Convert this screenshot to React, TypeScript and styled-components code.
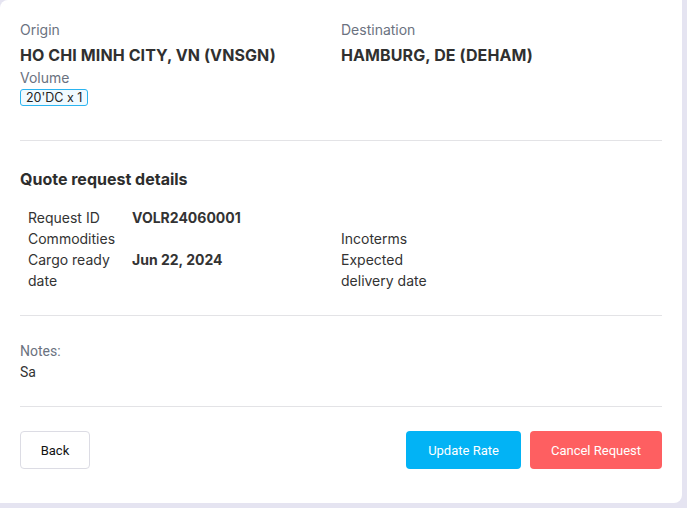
import React from "react";
import styled, { createGlobalStyle } from "styled-components";

const Global = createGlobalStyle`
  html, body { margin: 0; padding: 0; background: #e5e4f1; }
  body { font-family: Inter, "Noto Sans", sans-serif; }
`;

const Card = styled.div`
  width: 682px; height: 503px; box-sizing: border-box;
  background: #fff; border-radius: 8px 0 8px 0;
  padding: 19px 20px 0 20px;
  display: flex; flex-direction: column;
`;

const RouteRow = styled.div`
  display: grid; grid-template-columns: 321px 1fr;
  padding-bottom: 34px; border-bottom: 1px solid #e3e3e6;
`;

const Col = styled.div`
  display: flex; flex-direction: column;
`;

const Label = styled.div`
  font-size: 14px; line-height: 22px; color: #6b7280;
`;

const Place = styled.div`
  margin-top: 2px;
  font-size: 16px; line-height: 24px; font-weight: 700; color: #303030;
  letter-spacing: 0.1px;
`;

const Tag = styled.span`
  align-self: flex-start;
  font-size: 12.5px; line-height: 15px; color: #222;
  padding: 0 5px; border: 1px solid #2ab4f0; border-radius: 3px;
  background: #f0faff;
`;

const Section = styled.div`
  padding: 26px 0 24px; border-bottom: 1px solid #e3e3e6;
`;

const Title = styled.div`
  font-size: 16px; line-height: 24px; font-weight: 700; color: #2d2d2d;
  margin-bottom: 16px;
`;

const Grid = styled.div`
  display: grid; grid-template-columns: 104px 209px 100px;
  padding-left: 8px; font-size: 14px; line-height: 21px; color: #333;
`;

const Cell = styled.div<{ $bold?: boolean }>`
  font-weight: ${(p) => (p.$bold ? 700 : 400)};
`;

const Notes = styled.div`
  padding: 25px 0 23px; border-bottom: 1px solid #e3e3e6;
  font-family: Roboto, "Noto Sans", sans-serif;
`;

const NotesLabel = styled.div`
  font-size: 14px; line-height: 21px; color: #6b7280;
`;

const NotesText = styled.div`
  font-size: 14px; line-height: 21px; color: #333;
`;

const Footer = styled.div`
  display: flex; align-items: center; gap: 9px; padding-top: 24px;
`;

const Spacer = styled.div`
  flex: 1;
`;

const Btn = styled.button<{ $kind: "plain" | "primary" | "danger"; $w: number }>`
  height: 38px; width: ${(p) => p.$w}px; border-radius: 4px;
  font-family: Roboto, "Noto Sans", sans-serif; font-size: 13px;
  cursor: pointer;
  border: 1px solid ${(p) => (p.$kind === "plain" ? "#dcdce4" : "transparent")};
  background: ${(p) =>
    p.$kind === "primary" ? "#02b3f5" : p.$kind === "danger" ? "#fe5f61" : "#fff"};
  color: ${(p) => (p.$kind === "plain" ? "#111" : "#fff")};
`;

export default function App() {
  return (
    <>
      <Global />
      <Card>
        <RouteRow>
          <Col>
            <Label>Origin</Label>
            <Place>HO CHI MINH CITY, VN (VNSGN)</Place>
            <Label>Volume</Label>
            <Tag>20'DC x 1</Tag>
          </Col>
          <Col>
            <Label>Destination</Label>
            <Place>HAMBURG, DE (DEHAM)</Place>
          </Col>
        </RouteRow>

        <Section>
          <Title>Quote request details</Title>
          <Grid>
            <Cell>Request ID</Cell>
            <Cell $bold>VOLR24060001</Cell>
            <Cell />
            <Cell>Commodities</Cell>
            <Cell />
            <Cell>Incoterms</Cell>
            <Cell>Cargo ready date</Cell>
            <Cell $bold>Jun 22, 2024</Cell>
            <Cell>Expected delivery date</Cell>
          </Grid>
        </Section>

        <Notes>
          <NotesLabel>Notes:</NotesLabel>
          <NotesText>Sa</NotesText>
        </Notes>

        <Footer>
          <Btn $kind="plain" $w={70}>Back</Btn>
          <Spacer />
          <Btn $kind="primary" $w={115}>Update Rate</Btn>
          <Btn $kind="danger" $w={132}>Cancel Request</Btn>
        </Footer>
      </Card>
    </>
  );
}
